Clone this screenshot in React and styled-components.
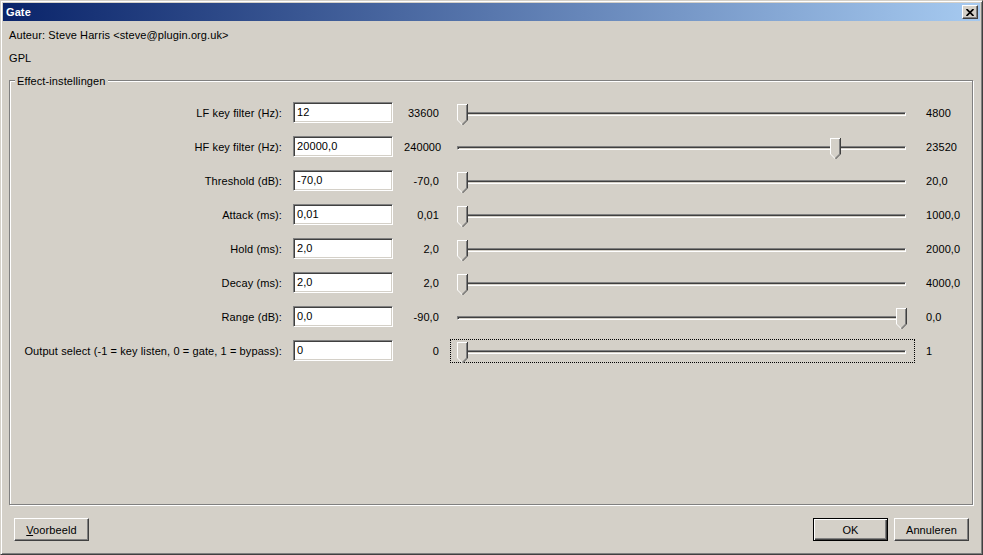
import React from 'react';
import styled, { createGlobalStyle } from 'styled-components';

const GlobalStyle = createGlobalStyle`
  html, body { margin: 0; padding: 0; background: #d4d0c8; }
  body { font-family: "Liberation Sans", Arial, sans-serif; font-size: 11px; color: #000; letter-spacing: 0.1px; }
  * { box-sizing: border-box; }
`;

const Window = styled.div`
  width: 983px;
  height: 555px;
  background: #d4d0c8;
  border: 1px solid;
  border-color: #d4d0c8 #404040 #404040 #d4d0c8;
  box-shadow: inset 1px 1px 0 #fff, inset -1px -1px 0 #808080;
  padding: 2px;
  display: flex;
  flex-direction: column;
`;

const TitleBar = styled.div`
  height: 18px;
  flex: none;
  display: flex;
  align-items: center;
  justify-content: space-between;
  padding: 0 2px 0 3px;
  background: linear-gradient(to right, #0a246a, #a6caf0);
`;

const Title = styled.span`
  color: #fff;
  font-weight: bold;
  font-size: 11px;
`;

const CloseButton = styled.div`
  width: 16px;
  height: 14px;
  display: flex;
  align-items: center;
  justify-content: center;
  background: #d4d0c8;
  border: 1px solid;
  border-color: #fff #404040 #404040 #fff;
  box-shadow: inset -1px -1px 0 #808080;
`;

const Body = styled.div`
  flex: 1;
  display: flex;
  flex-direction: column;
  padding: 0 6px 11px 6px;
`;

const InfoLine = styled.div`
  height: 14px;
  line-height: 14px;
  margin-top: ${p => p.$gap}px;
`;

const GroupBox = styled.div`
  position: relative;
  flex: 1;
  margin: 15px 1px 0 0;
  border: 1px solid #808080;
  box-shadow: 1px 1px 0 #fff, inset 1px 1px 0 #fff;
  padding: 20px 0 0 1px;
`;

const Legend = styled.span`
  position: absolute;
  top: -6px;
  left: 5px;
  padding: 0 2px;
  line-height: 13px;
  background: #d4d0c8;
`;

const Grid = styled.div`
  display: grid;
  grid-template-columns: 271px 100px 35px 465px auto;
  grid-auto-rows: 24px;
  column-gap: 11px;
  row-gap: 10px;
`;

const Label = styled.div`
  text-align: right;
  line-height: 24px;
  white-space: nowrap;
`;

const TextInput = styled.div`
  margin-top: 1px;
  height: 21px;
  background: #fff;
  border: 1px solid;
  border-color: #808080 #fff #fff #808080;
  box-shadow: inset 1px 1px 0 #404040, inset -1px -1px 0 #d4d0c8;
  padding: 0 3px;
  line-height: 19px;
`;

const MinValue = styled.div`
  text-align: right;
  line-height: 24px;
  white-space: nowrap;
`;

const MaxValue = styled.div`
  line-height: 24px;
  white-space: nowrap;
`;

const SliderBox = styled.div`
  position: relative;
  height: 24px;
  border: 1px dotted ${p => (p.$focused ? '#000' : 'transparent')};
`;

const Track = styled.div`
  position: absolute;
  left: 6px;
  right: 8px;
  top: 10px;
  height: 4px;
  border: 1px solid;
  border-color: #808080 #fff #fff #808080;
  box-shadow: inset 1px 1px 0 #404040, inset -1px -1px 0 #d4d0c8;
`;

const ThumbWrap = styled.div`
  position: absolute;
  top: 2px;
  width: 11px;
  height: 22px;
  line-height: 0;
`;

const Footer = styled.div`
  display: flex;
  align-items: center;
  gap: 6px;
  margin-top: 13px;
  padding: 0 5px 0 5px;
`;

const Spacer = styled.div`
  flex: 1;
`;

const Button = styled.div`
  width: 75px;
  height: 23px;
  display: flex;
  align-items: center;
  justify-content: center;
  background: #d4d0c8;
  border: 1px solid;
  border-color: ${p => (p.$default ? '#000' : '#fff #404040 #404040 #fff')};
  box-shadow: ${p =>
    p.$default
      ? 'inset 1px 1px 0 #fff, inset -1px -1px 0 #404040, inset -2px -2px 0 #808080'
      : 'inset -1px -1px 0 #808080'};
`;

const Accel = styled.span`
  text-decoration: underline;
`;

const Thumb = () => (
  <svg width="11" height="22" viewBox="0 0 11 22" shapeRendering="crispEdges">
    <polygon points="0,0 11,0 11,16 5.5,21.5 0,16" fill="#d4d0c8" />
    <path d="M0.5 16 V0.5 H10" stroke="#fff" fill="none" />
    <path d="M10.5 0 V16" stroke="#404040" fill="none" />
    <path d="M9.5 1 V16" stroke="#808080" fill="none" />
    <path d="M0.5 16 L5.5 21" stroke="#fff" fill="none" shapeRendering="auto" strokeWidth="1" />
    <path d="M10.5 16 L5.5 21" stroke="#404040" fill="none" shapeRendering="auto" strokeWidth="1" />
    <path d="M9.5 16 L5.5 20" stroke="#808080" fill="none" shapeRendering="auto" strokeWidth="1" />
  </svg>
);

const rows = [
  { label: 'LF key filter (Hz):', value: '12', min: '33600', max: '4800', pos: 0 },
  { label: 'HF key filter (Hz):', value: '20000,0', min: '240000', max: '23520', pos: 0.85 },
  { label: 'Threshold (dB):', value: '-70,0', min: '-70,0', max: '20,0', pos: 0 },
  { label: 'Attack (ms):', value: '0,01', min: '0,01', max: '1000,0', pos: 0 },
  { label: 'Hold (ms):', value: '2,0', min: '2,0', max: '2000,0', pos: 0 },
  { label: 'Decay (ms):', value: '2,0', min: '2,0', max: '4000,0', pos: 0 },
  { label: 'Range (dB):', value: '0,0', min: '-90,0', max: '0,0', pos: 1 },
  { label: 'Output select (-1 = key listen, 0 = gate, 1 = bypass):', value: '0', min: '0', max: '1', pos: 0, focused: true },
];

const TRAVEL = 439;

export default function App() {
  return (
    <>
      <GlobalStyle />
      <Window>
        <TitleBar>
          <Title>Gate</Title>
          <CloseButton>
            <svg width="8" height="7" viewBox="0 0 8 7">
              <path d="M0.5 0 L7.5 7 M7.5 0 L0.5 7" stroke="#000" strokeWidth="1.7" />
            </svg>
          </CloseButton>
        </TitleBar>
        <Body>
          <InfoLine $gap={7}>Auteur: Steve Harris &lt;steve@plugin.org.uk&gt;</InfoLine>
          <InfoLine $gap={9}>GPL</InfoLine>
          <GroupBox>
            <Legend>Effect-instellingen</Legend>
            <Grid>
              {rows.map(r => (
                <React.Fragment key={r.label}>
                  <Label>{r.label}</Label>
                  <TextInput>{r.value}</TextInput>
                  <MinValue>{r.min}</MinValue>
                  <SliderBox $focused={r.focused}>
                    <Track />
                    <ThumbWrap style={{ left: 6 + Math.round(r.pos * TRAVEL) }}>
                      <Thumb />
                    </ThumbWrap>
                  </SliderBox>
                  <MaxValue>{r.max}</MaxValue>
                </React.Fragment>
              ))}
            </Grid>
          </GroupBox>
          <Footer>
            <Button><span><Accel>V</Accel>oorbeeld</span></Button>
            <Spacer />
            <Button $default>OK</Button>
            <Button>Annuleren</Button>
          </Footer>
        </Body>
      </Window>
    </>
  );
}
